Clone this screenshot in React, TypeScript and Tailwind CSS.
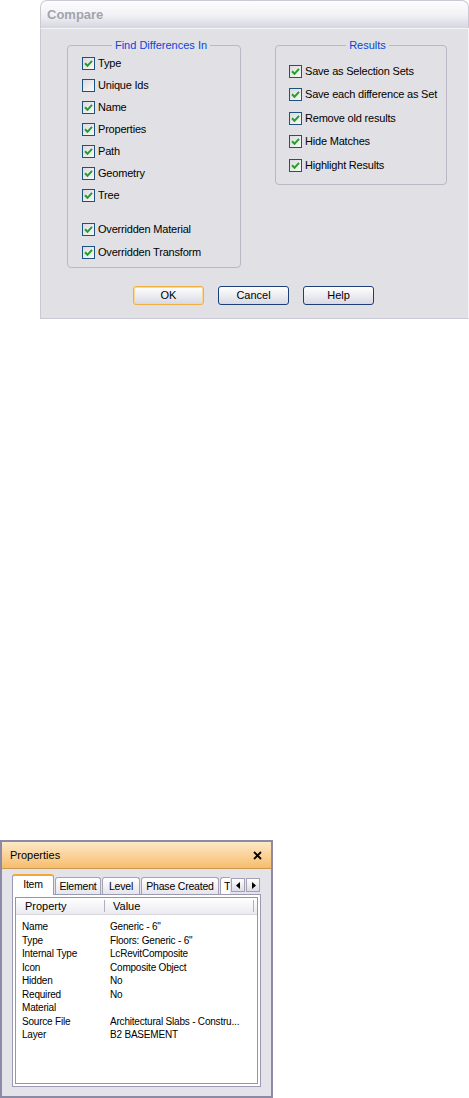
import React from 'react';

const font = { fontFamily: '"Liberation Sans", Arial, sans-serif' };

const Check = ({ checked }: { checked: boolean }) => (
  <span className="inline-flex h-[13px] w-[13px] shrink-0 items-center justify-center border border-[#1c5180] bg-gradient-to-br from-[#dcdbe0] to-[#f8f8fa]">
    {checked && (
      <svg width="9" height="9" viewBox="0 0 9 9">
        <path d="M1 4.2 L3.5 6.8 L8 1.8" fill="none" stroke="#21a121" strokeWidth="2" />
      </svg>
    )}
  </span>
);

const Option = ({ label, checked = true, className = '' }: { label: string; checked?: boolean; className?: string }) => (
  <div className={`flex items-center gap-[3px] text-[11px] leading-[13px] tracking-[-0.2px] text-black ${className}`}>
    <Check checked={checked} />
    <span>{label}</span>
  </div>
);

const Group = ({ title, className, children }: { title: string; className: string; children: React.ReactNode }) => (
  <fieldset className={`rounded-[4px] border border-[#bab8c4] ${className}`}>
    <legend className="mx-auto px-[3px] text-[11px] leading-[13px] text-[#0a46d8]">{title}</legend>
    {children}
  </fieldset>
);

const Button = ({ label, primary = false }: { label: string; primary?: boolean }) => (
  <button
    className={`h-[19px] w-[71px] rounded-[3px] border bg-gradient-to-b from-white to-[#d9d9e4] text-[11px] leading-[13px] text-black ${
      primary ? 'border-[#f0b040] shadow-[inset_0_0_0_1px_#fbd890]' : 'border-[#1c3f7a]'
    }`}
  >
    {label}
  </button>
);

const rows: [string, string][] = [
  ['Name', 'Generic - 6"'],
  ['Type', 'Floors: Generic - 6"'],
  ['Internal Type', 'LcRevitComposite'],
  ['Icon', 'Composite Object'],
  ['Hidden', 'No'],
  ['Required', 'No'],
  ['Material', ''],
  ['Source File', 'Architectural Slabs - Constru...'],
  ['Layer', 'B2  BASEMENT'],
];

const Tab = ({ label, active = false, w }: { label: string; active?: boolean; w: string }) => (
  <div
    className={`flex items-center justify-center rounded-t-[3px] border border-b-0 text-[10.5px] leading-[13px] tracking-[-0.2px] text-black ${w} ${
      active
        ? 'z-10 -mb-px h-[21px] border-[#9c9ab0] border-t-[#f0a830] border-t-2 bg-white pb-[2px]'
        : 'h-[17px] border-[#a4a2b6] bg-gradient-to-b from-white to-[#e6e5ec]'
    }`}
  >
    {label}
  </div>
);

export default function App() {
  return (
    <div className="min-h-[1098px] bg-white" style={font}>
      {/* Compare dialog */}
      <div className="ml-[40px] flex w-[429px] flex-col">
        <div className="flex h-[28px] items-center rounded-t-[7px] border border-b-0 border-[#c9c8d4] bg-gradient-to-b from-[#fdfdfe] via-[#f2f2f6] to-[#d6d6e0] pl-[6px]">
          <span className="text-[13px] font-bold text-[#a3a3ab]">Compare</span>
        </div>
        <div className="flex h-[291px] flex-col border border-t-[#f4f4f8] border-[#c9c8d4] border-r-[#f4f4f8] bg-[#e1e0e5] pl-[26px] pr-[21px] pt-[10px]">
          <div className="flex items-start justify-between">
            <Group title="Find Differences In" className="h-[229px] w-[174px] pl-[14px] pt-[4px]">
              <div className="flex flex-col">
                <Option label="Type" className="mt-[1px]" />
                <Option label="Unique Ids" checked={false} className="mt-[9px]" />
                <Option label="Name" className="mt-[9px]" />
                <Option label="Properties" className="mt-[9px]" />
                <Option label="Path" className="mt-[9px]" />
                <Option label="Geometry" className="mt-[9px]" />
                <Option label="Tree" className="mt-[9px]" />
                <Option label="Overridden Material" className="mt-[21px]" />
                <Option label="Overridden Transform" className="mt-[10px]" />
              </div>
            </Group>
            <Group title="Results" className="h-[146px] w-[172px] pl-[13px]">
              <div className="flex flex-col">
                <Option label="Save as Selection Sets" className="mt-[13px]" />
                <Option label="Save each difference as Set" className="mt-[10px]" />
                <Option label="Remove old results" className="mt-[11px]" />
                <Option label="Hide Matches" className="mt-[10px]" />
                <Option label="Highlight Results" className="mt-[11px]" />
              </div>
            </Group>
          </div>
          <div className="mt-[18px] flex justify-center gap-[14px] pr-[7px]">
            <Button label="OK" primary />
            <Button label="Cancel" />
            <Button label="Help" />
          </div>
        </div>
      </div>

      {/* Properties panel */}
      <div className="mt-[521px] flex h-[258px] w-[273px] flex-col border-2 border-[#8b8ba6] bg-[#e4e3ea]">
        <div className="flex h-[27px] items-center justify-between border-b border-[#c89a50] bg-gradient-to-b from-[#fde8c8] to-[#f7bd6a] pl-[8px] pr-[9px]">
          <span className="text-[11px] text-black">Properties</span>
          <svg width="9" height="9" viewBox="0 0 9 9">
            <path d="M1 1 L8 8 M8 1 L1 8" stroke="#000" strokeWidth="1.8" />
          </svg>
        </div>
        <div className="flex flex-1 flex-col px-[10px] pt-[5px] pb-[9px]">
          <div className="flex items-end gap-[1px]">
            <Tab label="Item" active w="w-[42px]" />
            <Tab label="Element" w="w-[46px]" />
            <Tab label="Level" w="w-[38px]" />
            <Tab label="Phase Created" w="w-[78px]" />
            <div className="flex h-[17px] w-[10px] items-center overflow-hidden rounded-tl-[3px] border border-b-0 border-r-0 border-[#a4a2b6] bg-white pl-[3px] text-[11px] leading-[13px]">
              T
            </div>
            <div className="mb-[2px] flex gap-[1px]">
              <div className="flex h-[14px] w-[14px] items-center justify-center border border-[#a4a2b6] bg-gradient-to-b from-white to-[#dcdbe4]">
                <svg width="5" height="7" viewBox="0 0 5 7"><path d="M4 0 L0 3.5 L4 7 Z" fill="#000" /></svg>
              </div>
              <div className="flex h-[14px] w-[14px] items-center justify-center border border-[#a4a2b6] bg-gradient-to-b from-white to-[#dcdbe4]">
                <svg width="5" height="7" viewBox="0 0 5 7"><path d="M1 0 L5 3.5 L1 7 Z" fill="#000" /></svg>
              </div>
            </div>
          </div>
          <div className="flex flex-1 flex-col border border-[#9c9ab0] bg-white p-[2px]">
            <div className="flex flex-1 flex-col border border-[#7f9db9] bg-white">
              <div className="flex h-[17px] items-center border-b border-[#d8d7e0] bg-gradient-to-b from-white to-[#ebeaf0] text-[11px] text-black">
                <span className="w-[88px] pl-[9px]">Property</span>
                <span className="h-[12px] w-px bg-[#b0afbc]" />
                <span className="flex-1 pl-[8px]">Value</span>
                <span className="mr-[3px] h-[12px] w-px bg-[#b0afbc]" />
              </div>
              <div className="flex flex-col pt-[5px] text-[10px] leading-[13.5px] tracking-[-0.2px] text-black">
                {rows.map(([k, v]) => (
                  <div key={k} className="flex">
                    <span className="w-[94px] pl-[6px]">{k}</span>
                    <span className="flex-1 whitespace-nowrap">{v}</span>
                  </div>
                ))}
              </div>
            </div>
          </div>
        </div>
      </div>
    </div>
  );
}
